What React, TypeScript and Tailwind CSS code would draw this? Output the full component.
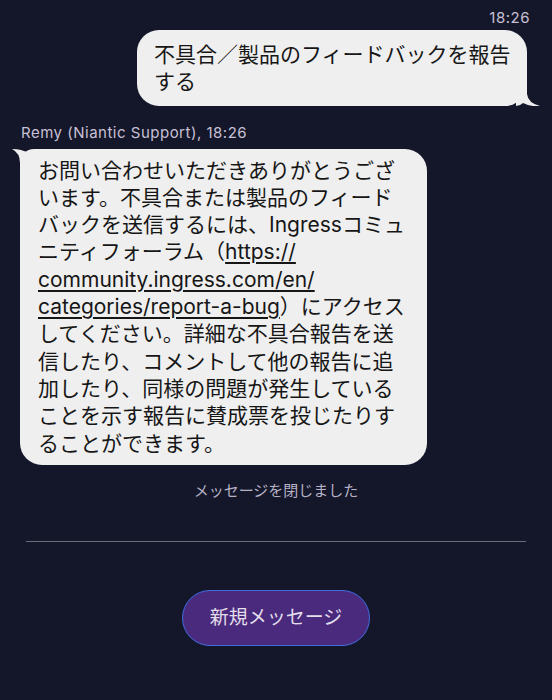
import React from "react";

const font = "font-['Inter','Noto_Sans_CJK_JP',sans-serif]";

function OutTail() {
  return (
    <svg
      className="absolute right-[-13px] bottom-0"
      width="24"
      height="24"
      viewBox="0 0 24 24"
    >
      <path d="M0 0 L11 0 L11 12 Q12 21 24 24 Q15 25 7 21 Q4 24 0 24 Z" fill="#efefef" />
    </svg>
  );
}

function InTail() {
  return (
    <svg className="absolute left-[-8px] top-0" width="24" height="24" viewBox="0 0 24 24">
      <path d="M0 0 Q10 0 16 4 Q20 1 24 0 L24 24 L8 24 L8 14 Q8 4 0 0 Z" fill="#efefef" />
    </svg>
  );
}

const incomingLines: React.ReactNode[] = [
  "お問い合わせいただきありがとうござ",
  "います。不具合または製品のフィード",
  "バックを送信するには、Ingressコミュ",
  <>
    ニティフォーラム（<span className="underline underline-offset-[3px]">https://</span>
  </>,
  <span className="underline underline-offset-[3px]">community.ingress.com/en/</span>,
  <>
    <span className="underline underline-offset-[3px]">categories/report-a-bug</span>）にアクセス
  </>,
  "してください。詳細な不具合報告を送",
  "信したり、コメントして他の報告に追",
  "加したり、同様の問題が発生している",
  "ことを示す報告に賛成票を投じたりす",
  "ることができます。",
];

export default function App() {
  return (
    <div className={`min-h-[700px] w-full bg-[#141729] ${font}`}>
      {/* timestamp */}
      <div className="pt-[8px] pr-[22px] text-right text-[15px] leading-[20px] tracking-[0.5px] text-[#c8c0d6]">
        18:26
      </div>

      {/* outgoing */}
      <div className="mt-[2px] flex justify-end pr-[25px]">
        <div className="relative w-[390px] rounded-[22px] bg-[#efefef] pt-[11px] pb-[10px] pl-[17px] text-[21px] leading-[27.3px] text-[#161616]">
          <div className="relative whitespace-nowrap">不具合／製品のフィードバックを報告</div>
          <div className="relative whitespace-nowrap">する</div>
          <OutTail />
        </div>
      </div>

      {/* sender */}
      <div className="mt-[17px] pl-[21px] text-[15px] leading-[20px] tracking-[0.5px] text-[#c8c0d6]">
        Remy (Niantic Support), 18:26
      </div>

      {/* incoming */}
      <div className="mt-[6px] pl-[20px]">
        <div className="relative w-[407px] rounded-[22px] rounded-tl-[14px] bg-[#efefef] py-[8px] pl-[18px] text-[21px] leading-[27.3px] text-[#161616]">
          <InTail />
          {incomingLines.map((l, i) => (
            <div key={i} className="relative whitespace-nowrap">
              {l}
            </div>
          ))}
        </div>
      </div>

      {/* closed */}
      <div className="mt-[16px] text-center text-[15px] leading-[20px] text-[#b7b1c6]">
        メッセージを閉じました
      </div>

      <div className="mx-[26px] mt-[40px] h-px bg-[#6c6c76]" />

      <div className="mt-[48px] flex justify-center">
        <button className="h-[56px] w-[188px] rounded-full border-[1.5px] border-[#3f6ee0] bg-[#4a2a7c] text-[19px] text-[#e2deec]">
          新規メッセージ
        </button>
      </div>
    </div>
  );
}
